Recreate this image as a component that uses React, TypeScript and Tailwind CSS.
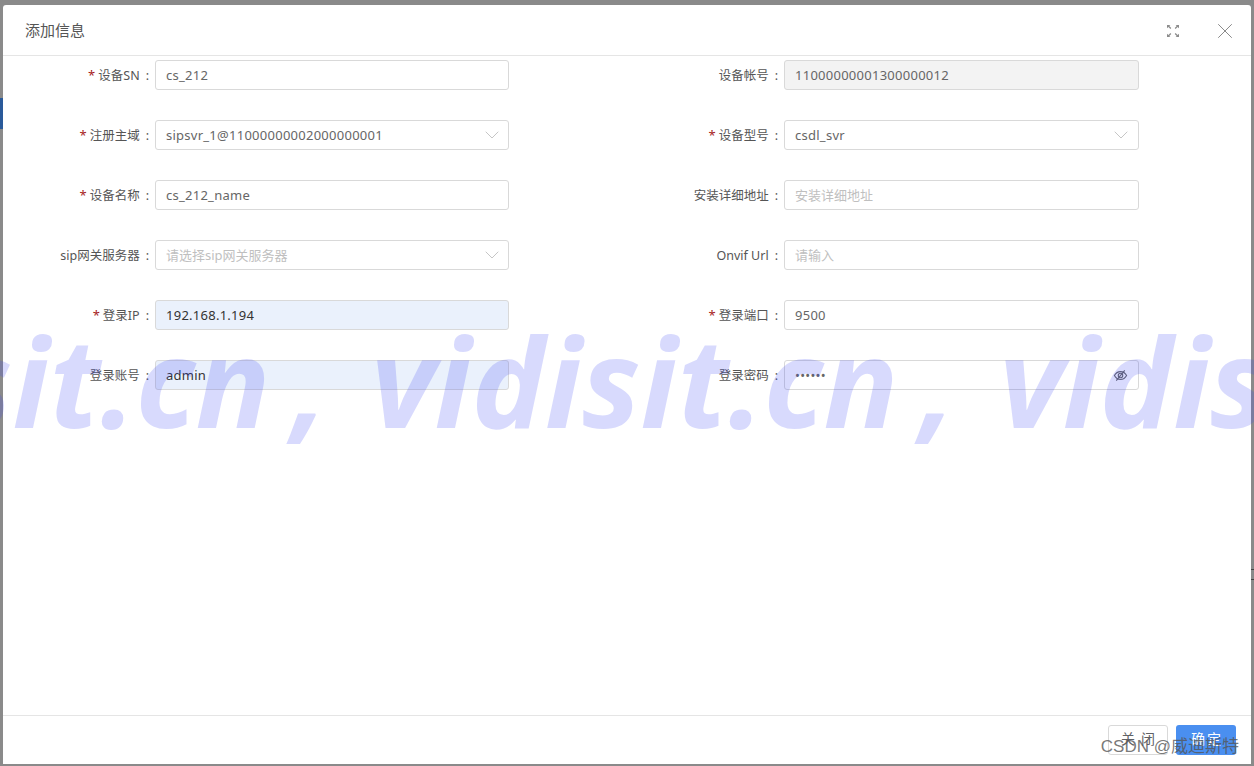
import { ChevronDown, X } from "lucide-react";

type Field = {
  label: string;
  required?: boolean;
  value?: string;
  placeholder?: string;
  kind?: "input" | "select" | "password";
  tone?: "plain" | "autofill" | "disabled";
};

const rows: [Field, Field][] = [
  [
    { label: "设备SN", required: true, value: "cs_212" },
    { label: "设备帐号", value: "11000000001300000012", tone: "disabled" },
  ],
  [
    { label: "注册主域", required: true, value: "sipsvr_1@11000000002000000001", kind: "select" },
    { label: "设备型号", required: true, value: "csdl_svr", kind: "select" },
  ],
  [
    { label: "设备名称", required: true, value: "cs_212_name" },
    { label: "安装详细地址", placeholder: "安装详细地址" },
  ],
  [
    { label: "sip网关服务器", placeholder: "请选择sip网关服务器", kind: "select" },
    { label: "Onvif Url", placeholder: "请输入" },
  ],
  [
    { label: "登录IP", required: true, value: "192.168.1.194", tone: "autofill" },
    { label: "登录端口", required: true, value: "9500" },
  ],
  [
    { label: "登录账号", value: "admin", tone: "autofill" },
    { label: "登录密码", value: "••••••", kind: "password" },
  ],
];

function EyeOff() {
  return (
    <svg viewBox="0 0 16 16" className="mr-[5px] h-[15px] w-[15px] text-[#666]" fill="none" stroke="currentColor" strokeWidth="1.2">
      <path d="M1.5 8C3 5.2 5.3 3.8 8 3.8S13 5.2 14.5 8C13 10.8 10.7 12.2 8 12.2S3 10.8 1.5 8Z" />
      <circle cx="8" cy="8" r="2.4" />
      <path d="M12.5 2.5 3.5 13.5" />
    </svg>
  );
}

function Expand() {
  return (
    <svg viewBox="0 0 14 14" className="h-[14px] w-[14px] text-[#8c8c8c]" fill="currentColor">
      <path d="M1 1h3.4L3.3 2.1l2 2-.9.9-2-2L1 4.2ZM13 1v3.2L11.6 3l-2 2-.9-.9 2-2L9.6 1ZM1 13V9.8L2.4 11l2-2 .9.9-2 2L4.4 13ZM13 13H9.6l1.1-1.1-2-2 .9-.9 2 2L13 9.8Z" />
    </svg>
  );
}

function FormItem({ field, right }: { field: Field; right: boolean }) {
  const tone = field.tone || "plain";
  return (
    <div className="flex h-[30px] items-center">
      <label className="flex w-[152px] shrink-0 items-center justify-end pr-[6px] pt-[2px] text-[12.5px] text-[#555]">
        {field.required && <span className="mr-[3px] text-[13px] text-[#a61c1c]">*</span>}
        {field.label}
        <span className="ml-[6px]">:</span>
      </label>
      <div
        className={`flex h-[30px] items-center rounded-[3px] border border-[#d9d9d9] pl-[10px] text-[13px] ${
          right ? "w-[355px] pr-[5px]" : "w-[354px] pr-[4px]"
        } ${tone === "autofill" ? "bg-[#e8effc]/90 text-[#333]" : tone === "disabled" ? "bg-[#f3f3f3] text-[#666]" : "text-[#666]"}`}
      >
        <span className={`flex-1 pt-[2px] ${field.placeholder ? "text-[#bfbfbf]" : "tracking-[0.26px]"}`}>
          {field.value || field.placeholder}
        </span>
        {field.kind === "select" && <ChevronDown size={24} strokeWidth={0.8} className="text-[#b8b8b8]" />}
        {field.kind === "password" && <EyeOff />}
      </div>
    </div>
  );
}

export default function App() {
  return (
    <div className="relative h-[766px] w-[1254px] overflow-hidden bg-[#8a8a8a] font-['Noto_Sans','Noto_Sans_CJK_SC',sans-serif]">
      {/* page behind the dialog, only a sliver shows */}
      <div className="absolute left-0 top-[98px] h-[31px] w-[3px] bg-[#2a5a9a]" />
      <div className="absolute right-0 top-[569px] h-[11px] w-[3px] border-y border-[#444]" />

      <div className="absolute bottom-[2px] left-[3px] right-[3px] top-[5px] flex flex-col rounded-t-[3px] bg-white">
        <div className="flex h-[51px] shrink-0 items-center justify-between border-b border-[#e5e5e5] pl-[22px] pr-[13px]">
          <span className="text-[15px] text-[#555]">添加信息</span>
          <div className="flex items-center gap-[32px] pt-[2px]">
            <Expand />
            <X size={26} strokeWidth={0.8} className="text-[#777]" />
          </div>
        </div>

        <div className="grid flex-1 grid-cols-[629px_619px] content-start gap-y-[30px] pt-[4px]">
          {rows.map((row) =>
            row.map((field, i) => <FormItem key={field.label} field={field} right={i === 1} />)
          )}
        </div>

        <div className="flex h-[49px] shrink-0 items-start justify-end gap-[8px] border-t border-[#e5e5e5] pr-[15px] pt-[9px]">
          <button className="h-[30px] w-[60px] rounded-[3px] border border-[#d9d9d9] bg-white pb-[3px] pl-[6px] text-[14px] tracking-[6px] text-[#606266]">
            关闭
          </button>
          <button className="h-[30px] w-[60px] rounded-[3px] bg-[#4a8ff0] pb-[3px] pl-[2px] text-[14px] tracking-[2px] text-white">确定</button>
        </div>
      </div>

      {/* watermark */}
      <div className="pointer-events-none absolute left-[-257px] top-[306px] whitespace-nowrap font-['Open_Sans',sans-serif] text-[124px] font-bold italic leading-[1.2] text-[#3a46f5]/20">
        vidisit.cn <span className="relative left-[-10px] mr-[1px]">,</span> vidisit.cn{" "}
        <span className="relative left-[-10px] mr-[1px]">,</span> vidisit.cn
      </div>

      <div className="pointer-events-none absolute bottom-[9px] right-[15px] font-['Liberation_Sans','Noto_Sans_CJK_SC',sans-serif] text-[17px] leading-[20px] text-[#555]/80">
        CSDN @威迪斯特
      </div>
    </div>
  );
}
